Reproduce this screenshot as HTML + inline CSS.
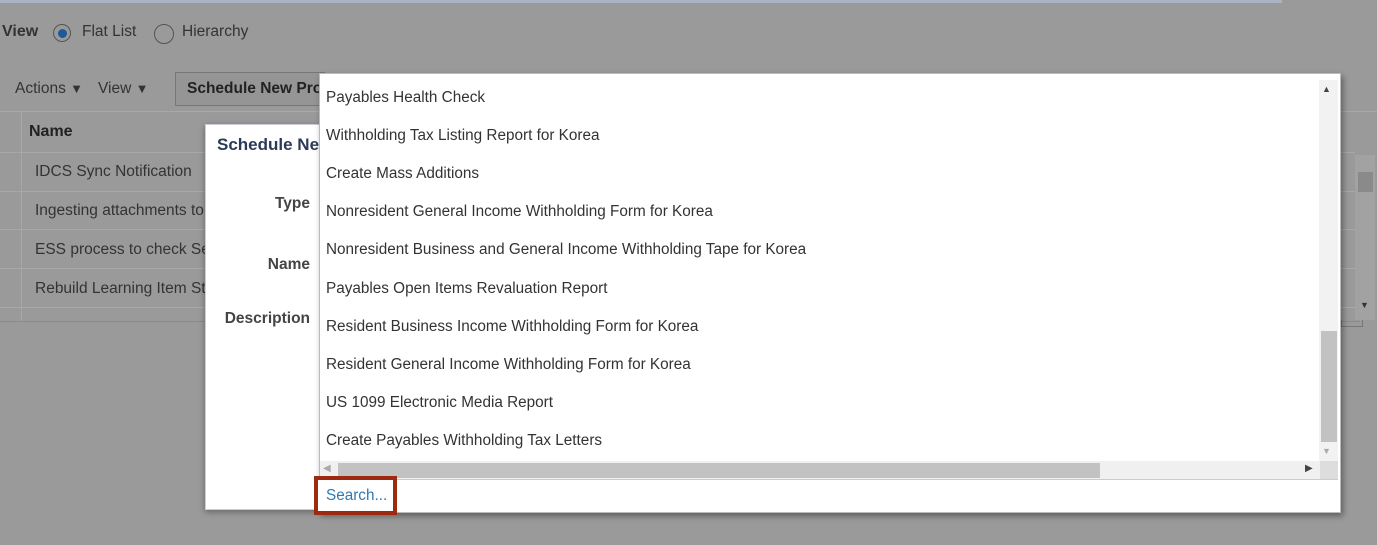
<!DOCTYPE html>
<html><head><style>
body{margin:0;width:1377px;height:545px;background:#9a9a9a;font-family:"Liberation Sans",sans-serif;position:relative;overflow:hidden;color:#2a2a2a}
.a{position:absolute;white-space:nowrap}
.it{position:absolute;left:326px;font-size:15.3px;color:#333}
</style></head><body>
<div class="a" style="left:0;top:0;width:1282px;height:3px;background:#a9b3c2"></div>
<div class="a" style="left:2px;top:23px;font-size:16px;font-weight:bold;color:#333">View</div>
<div class="a" style="left:53px;top:24px;width:18px;height:18px;border:1px solid #555;border-radius:50%;box-sizing:border-box"></div>
<div class="a" style="left:58px;top:29px;width:9px;height:9px;background:#1f5a96;border-radius:50%"></div>
<div class="a" style="left:82px;top:23px;font-size:15.5px;color:#333">Flat List</div>
<div class="a" style="left:154px;top:24px;width:20px;height:20px;border:1px solid #555;border-radius:50%;box-sizing:border-box"></div>
<div class="a" style="left:182px;top:23px;font-size:15.5px;color:#333">Hierarchy</div>
<div class="a" style="left:15px;top:80px;font-size:15.5px;color:#333">Actions <span style="font-size:13px">▼</span></div>
<div class="a" style="left:98px;top:80px;font-size:15.5px;color:#333">View <span style="font-size:13px">▼</span></div>
<div class="a" style="left:175px;top:72px;width:150px;height:34px;border:1px solid #777;box-sizing:border-box;background:#959595"></div>
<div class="a" style="left:187px;top:80px;font-size:15.5px;font-weight:bold;color:#222">Schedule New Pro</div>
<div class="a" style="left:0;top:111px;width:1377px;height:1px;background:#a8a8a8"></div>
<div class="a" style="left:21px;top:111px;width:1px;height:210px;background:#a8a8a8"></div>
<div class="a" style="left:29px;top:123px;font-size:16px;font-weight:bold;color:#222">Name</div>
<div class="a" style="left:0;top:152px;width:1355px;height:1px;background:#a8a8a8"></div>
<div class="a" style="left:0;top:191px;width:1355px;height:1px;background:#a8a8a8"></div>
<div class="a" style="left:0;top:229px;width:1355px;height:1px;background:#a8a8a8"></div>
<div class="a" style="left:0;top:268px;width:1355px;height:1px;background:#a8a8a8"></div>
<div class="a" style="left:0;top:307px;width:1355px;height:1px;background:#a8a8a8"></div>
<div class="a" style="left:0;top:321px;width:1360px;height:1px;background:#8a8a8a"></div>
<div class="a" style="left:35px;top:163px;font-size:15.5px;color:#333">IDCS Sync Notification</div>
<div class="a" style="left:35px;top:202px;font-size:15.5px;color:#333">Ingesting attachments to</div>
<div class="a" style="left:35px;top:241px;font-size:15.5px;color:#333">ESS process to check Se</div>
<div class="a" style="left:35px;top:280px;font-size:15.5px;color:#333">Rebuild Learning Item St</div>
<div class="a" style="left:1355px;top:155px;width:20px;height:165px;background:#a2a2a2"></div>
<div class="a" style="left:1358px;top:172px;width:15px;height:20px;background:#8a8a8a"></div>
<div class="a" style="left:1360px;top:300px;font-size:9px;color:#333">▼</div>
<div class="a" style="left:1341px;top:320px;width:20px;height:6px;border:1px solid #777;border-top:none"></div>

<div class="a" style="left:205px;top:124px;width:120px;height:384px;background:#fff;box-shadow:0 2px 6px rgba(0,0,0,.35);border:1px solid #ccd"></div>
<div class="a" style="left:217px;top:135px;font-size:17px;font-weight:bold;color:#2b3b55">Schedule Ne</div>
<div class="a" style="right:1067px;top:195px;font-size:15.5px;font-weight:bold;color:#444">Type</div>
<div class="a" style="right:1067px;top:256px;font-size:15.5px;font-weight:bold;color:#444">Name</div>
<div class="a" style="right:1067px;top:310px;font-size:15.5px;font-weight:bold;color:#444">Description</div>

<div class="a" style="left:319px;top:73px;width:1022px;height:440px;background:#fff;box-shadow:2px 3px 6px rgba(0,0,0,.4);border:1px solid #bbb;box-sizing:border-box"></div>
<div class="it" style="top:89px">Payables Health Check</div>
<div class="it" style="top:127px">Withholding Tax Listing Report for Korea</div>
<div class="it" style="top:165px">Create Mass Additions</div>
<div class="it" style="top:203px">Nonresident General Income Withholding Form for Korea</div>
<div class="it" style="top:241px">Nonresident Business and General Income Withholding Tape for Korea</div>
<div class="it" style="top:280px">Payables Open Items Revaluation Report</div>
<div class="it" style="top:318px">Resident Business Income Withholding Form for Korea</div>
<div class="it" style="top:356px">Resident General Income Withholding Form for Korea</div>
<div class="it" style="top:394px">US 1099 Electronic Media Report</div>
<div class="it" style="top:432px">Create Payables Withholding Tax Letters</div>
<div class="a" style="left:1319px;top:80px;width:19px;height:381px;background:#f2f2f2"></div>
<div class="a" style="left:1322px;top:84px;font-size:9px;color:#444">▲</div>
<div class="a" style="left:1321px;top:331px;width:16px;height:111px;background:#c2c2c2"></div>
<div class="a" style="left:1322px;top:446px;font-size:9px;color:#aaa">▼</div>
<div class="a" style="left:320px;top:461px;width:1018px;height:18px;background:#f0f0f0;border-bottom:1px solid #ccc"></div>
<div class="a" style="left:338px;top:463px;width:762px;height:15px;background:#c2c2c2"></div>
<div class="a" style="left:323px;top:463px;font-size:10px;color:#aaa">◀</div>
<div class="a" style="left:1305px;top:463px;font-size:10px;color:#444">▶</div>
<div class="a" style="left:1320px;top:461px;width:18px;height:18px;background:#ddd"></div>
<div class="a" style="left:314px;top:476px;width:83px;height:39px;border:4px solid #9b2a10;box-sizing:border-box;background:#fff"></div>
<div class="a" style="left:326px;top:487px;font-size:15.3px;color:#2f7ab0">Search...</div>
</body></html>
